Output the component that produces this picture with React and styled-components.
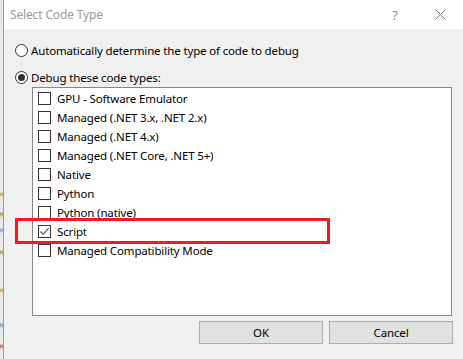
import React from "react";
import styled, { createGlobalStyle } from "styled-components";

const items = [
  { label: "GPU - Software Emulator" },
  { label: "Managed (.NET 3.x, .NET 2.x)" },
  { label: "Managed (.NET 4.x)" },
  { label: "Managed (.NET Core, .NET 5+)" },
  { label: "Native" },
  { label: "Python" },
  { label: "Python (native)" },
  { label: "Script", checked: true },
  { label: "Managed Compatibility Mode" },
];

export default function App() {
  return (
    <Screen>
      <GlobalStyle />
      <Sliver />
      <Dialog>
        <TitleBar>
          <Title>Select Code Type</Title>
          <TitleButton>?</TitleButton>
          <TitleButton>
            <svg width="11" height="11" viewBox="0 0 11 11">
              <path d="M0.5 0.5 L10.5 10.5 M10.5 0.5 L0.5 10.5" stroke="#7a7a7a" strokeWidth="1" fill="none" />
            </svg>
          </TitleButton>
        </TitleBar>
        <Body>
          <RadioRow>
            <Radio />
            <span>Automatically determine the type of code to debug</span>
          </RadioRow>
          <RadioRow>
            <Radio $checked />
            <span>Debug these code types:</span>
          </RadioRow>
          <ListBox>
            {items.map((it) => (
              <Item key={it.label}>
                <Check>
                  {it.checked && (
                    <svg width="11" height="11" viewBox="0 0 11 11">
                      <path d="M1.5 5.5 L4.2 8.3 L9.6 2.2" stroke="#444" strokeWidth="1.1" fill="none" />
                    </svg>
                  )}
                </Check>
                <span>{it.label}</span>
              </Item>
            ))}
          </ListBox>
          <Buttons>
            <Button>OK</Button>
            <Button>Cancel</Button>
          </Buttons>
        </Body>
      </Dialog>
      <Highlight />
    </Screen>
  );
}

const GlobalStyle = createGlobalStyle`
  html, body {
    margin: 0;
    padding: 0;
    background: #f0f0f0;
  }
  body {
    font-family: "Noto Sans", "Open Sans", sans-serif;
    font-size: 11.5px;
    letter-spacing: -0.15px;
    color: #000;
  }
`;

const Screen = styled.div`
  position: relative;
  display: flex;
  width: 463px;
  height: 359px;
  overflow: hidden;
  background: #f0f0f0;
`;

const Sliver = styled.div`
  width: 3px;
  flex: none;
  background: linear-gradient(
    to bottom,
    #e8e8e8 0,
    #e8e8e8 192px,
    #c9a24a 194px,
    #e8e8e8 197px,
    #e8e8e8 212px,
    #b08a3a 214px,
    #e8e8e8 217px,
    #e8e8e8 228px,
    #7ba7d8 230px,
    #e8e8e8 233px,
    #e8e8e8 250px,
    #b89050 252px,
    #e8e8e8 255px,
    #e8e8e8 288px,
    #c9a24a 290px,
    #e8e8e8 293px,
    #e8e8e8 322px,
    #7ba7d8 325px,
    #e8e8e8 329px,
    #e8e8e8 344px,
    #c06040 346px,
    #e8e8e8 349px
  );
  border-right: 1px solid #9a9a9a;
`;

const Dialog = styled.div`
  flex: 1;
  display: flex;
  flex-direction: column;
  background: #f0f0f0;
`;

const TitleBar = styled.div`
  height: 29px;
  flex: none;
  display: flex;
  align-items: center;
  background: #fff;
  padding-left: 6px;
`;

const Title = styled.div`
  flex: 1;
  color: #9b9b9b;
  font-size: 12px;
  padding-bottom: 1px;
`;

const TitleButton = styled.div`
  width: 44px;
  height: 29px;
  display: flex;
  align-items: center;
  justify-content: center;
  color: #8a8a8a;
  font-size: 13px;
  &:last-child {
    width: 46px;
  }
`;

const Body = styled.div`
  flex: 1;
  display: flex;
  flex-direction: column;
  padding: 11px 11px 0 11px;
`;

const RadioRow = styled.div`
  height: 20px;
  display: flex;
  align-items: center;
  gap: 3px;
  & + & {
    margin-top: 7px;
  }
`;

const Radio = styled.div`
  width: 13px;
  height: 13px;
  box-sizing: border-box;
  border: 1px solid #333;
  border-radius: 50%;
  background: #fff;
  flex: none;
  display: flex;
  align-items: center;
  justify-content: center;
  &::after {
    content: "";
    display: ${(p) => (p.$checked ? "block" : "none")};
    width: 7px;
    height: 7px;
    border-radius: 50%;
    background: #333;
  }
`;

const ListBox = styled.div`
  margin-left: 17px;
  height: 229px;
  box-sizing: border-box;
  border: 1px solid #828790;
  background: #fff;
  padding: 1px 0 0 5px;
  display: flex;
  flex-direction: column;
`;

const Item = styled.div`
  height: 19px;
  display: flex;
  align-items: center;
  gap: 6px;
`;

const Check = styled.div`
  width: 13px;
  height: 13px;
  box-sizing: border-box;
  border: 1px solid #333;
  background: #fff;
  flex: none;
  display: flex;
  align-items: center;
  justify-content: center;
`;

const Buttons = styled.div`
  display: flex;
  justify-content: flex-end;
  gap: 6px;
  margin-top: 5px;
  margin-right: -1px;
`;

const Button = styled.div`
  width: 124px;
  height: 23px;
  box-sizing: border-box;
  border: 1px solid #adadad;
  background: #e1e1e1;
  display: flex;
  align-items: center;
  justify-content: center;
  padding-bottom: 1px;
`;

const Highlight = styled.div`
  position: absolute;
  left: 15px;
  top: 218px;
  width: 315px;
  height: 26px;
  box-sizing: border-box;
  border: 3px solid #ec1c24;
  pointer-events: none;
`;
